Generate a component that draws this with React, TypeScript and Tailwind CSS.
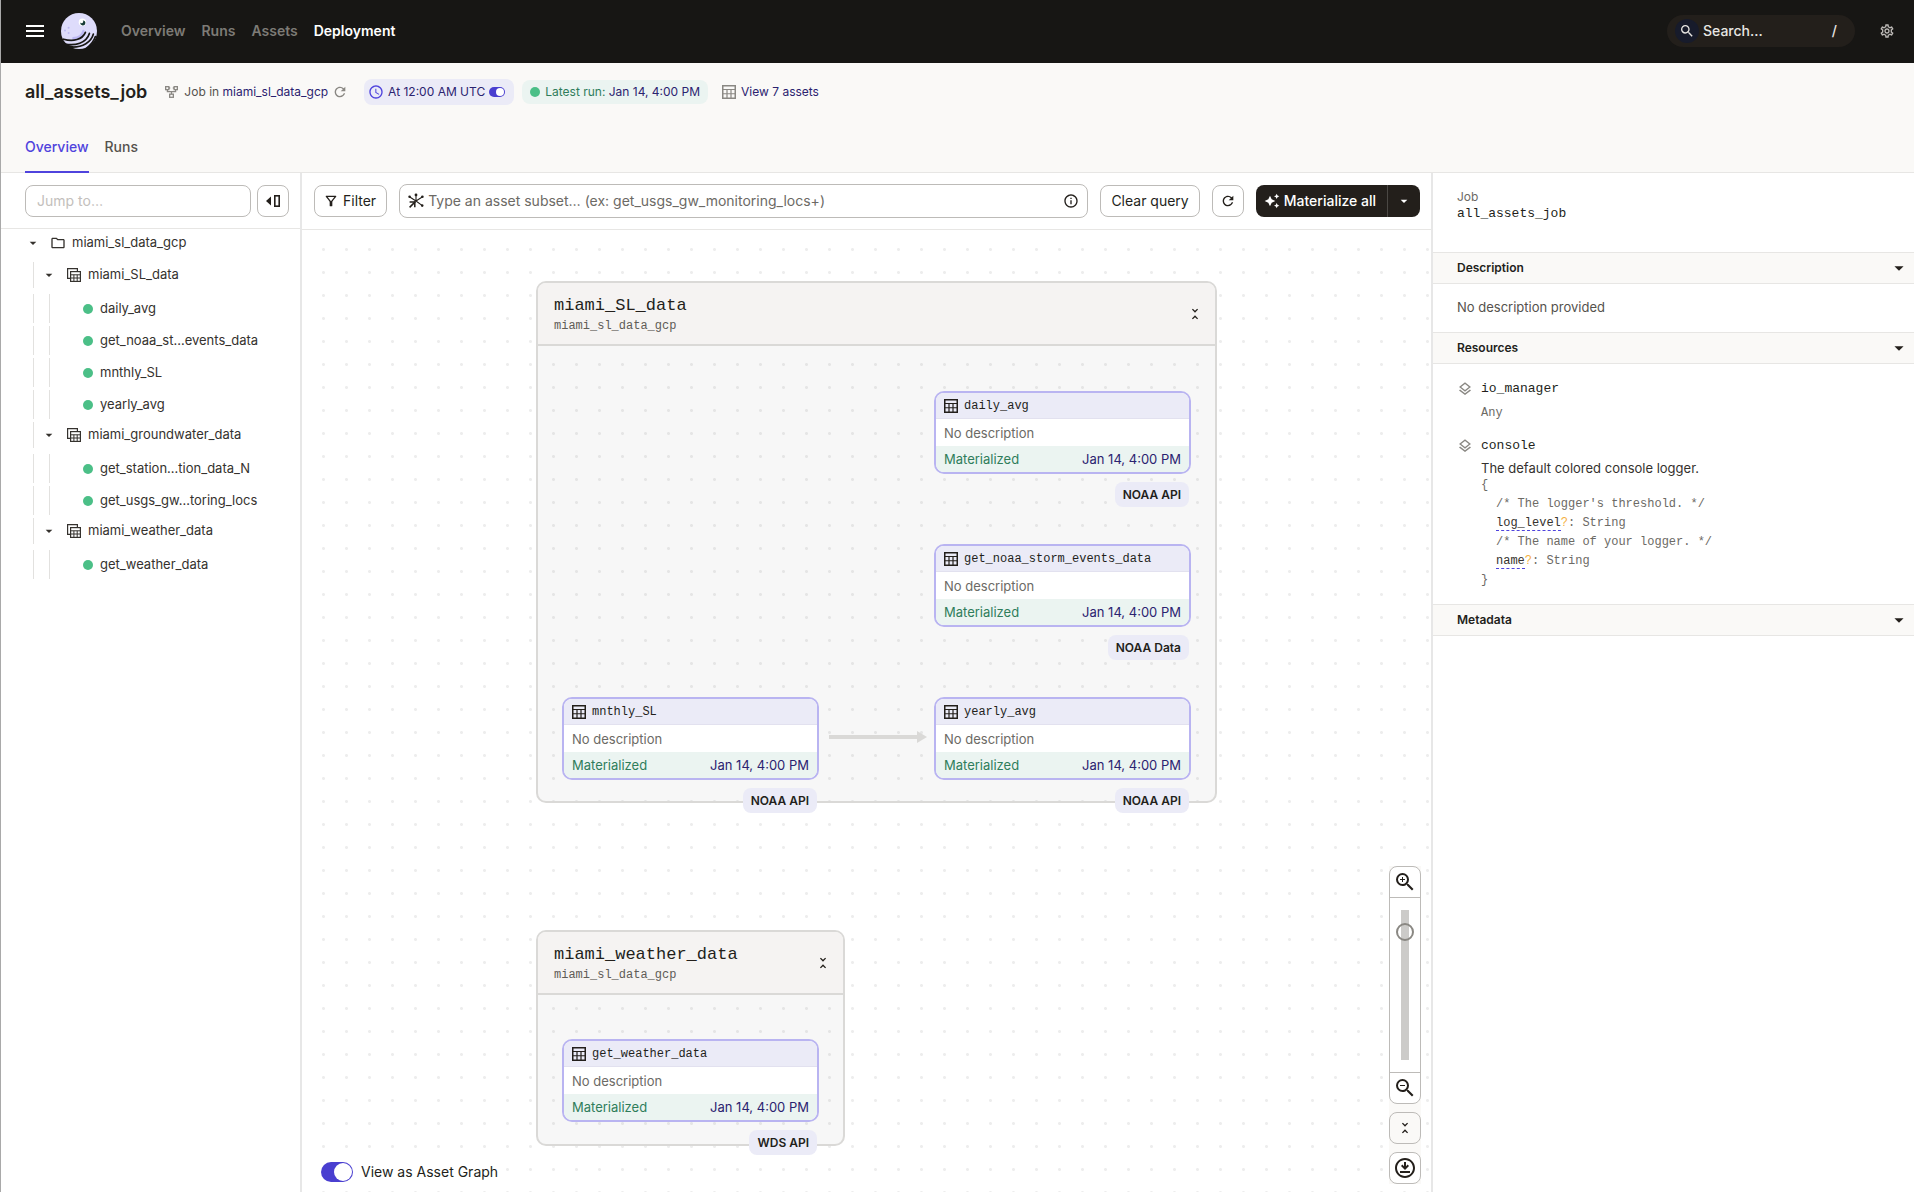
import { useState } from "react";
import type { ReactNode } from "react";
import {
  MdArrowDropDown,
  MdAutoAwesome,
  MdInfoOutline,
  MdOutlineDownloadForOffline,
  MdOutlineFilterAlt,
  MdOutlineFolder,
  MdOutlineLayers,
  MdOutlineSettings,
  MdRefresh,
  MdSchedule,
  MdSearch,
  MdUnfoldLess,
  MdZoomIn,
  MdZoomOut,
} from "react-icons/md";

type TreeRow = {
  kind: "location" | "group" | "asset";
  name: string;
};

type AssetNodeProps = {
  name: string;
  tag: string;
  className: string;
};

type GroupBoxProps = {
  name: string;
  location: string;
  className: string;
};

const TREE: TreeRow[] = [
  { kind: "location", name: "miami_sl_data_gcp" },
  { kind: "group", name: "miami_SL_data" },
  { kind: "asset", name: "daily_avg" },
  { kind: "asset", name: "get_noaa_st…events_data" },
  { kind: "asset", name: "mnthly_SL" },
  { kind: "asset", name: "yearly_avg" },
  { kind: "group", name: "miami_groundwater_data" },
  { kind: "asset", name: "get_station…tion_data_N" },
  { kind: "asset", name: "get_usgs_gw…toring_locs" },
  { kind: "group", name: "miami_weather_data" },
  { kind: "asset", name: "get_weather_data" },
];

const TableIcon = ({ className = "" }: { className?: string }) => (
  <svg
    viewBox="0 0 14 14"
    className={`h-3.5 w-3.5 shrink-0 ${className}`}
    fill="none"
    stroke="currentColor"
  >
    <rect x="0.75" y="0.75" width="12.5" height="12.5" strokeWidth="1.5" />
    <path d="M1 4.5H13M1 8.75H13M5 4.5V13M9 4.5V13" strokeWidth="1.2" />
  </svg>
);

const JobIcon = () => (
  <svg
    viewBox="0 0 13 12"
    className="ml-[18px] h-3 w-[13px] shrink-0 text-[#8a8883]"
    fill="none"
    stroke="currentColor"
    strokeWidth="1.3"
  >
    <rect x="0.65" y="0.65" width="3.2" height="3" />
    <rect x="9.15" y="0.65" width="3.2" height="3" />
    <rect x="4.65" y="8.2" width="3.7" height="3.1" />
    <path d="M2.4 3.8V5.6H10.6V3.8M6.5 5.6V8M3.9 2H5.2M7.8 2H9" />
  </svg>
);

const GroupIcon = () => (
  <svg
    viewBox="0 0 14 14"
    className="h-3.5 w-3.5 shrink-0"
    fill="none"
    stroke="currentColor"
  >
    <path d="M3 10.4H0.6V0.6H10.4V3" strokeWidth="1.2" />
    <rect x="3.6" y="3.6" width="9.8" height="9.8" strokeWidth="1.2" />
    <path d="M3.6 6.8H13.4M3.6 10H13.4M6.9 6.8V13.4M10.2 6.8V13.4" />
  </svg>
);

const PanelHideIcon = () => (
  <svg viewBox="0 0 16 14" className="h-3.5 w-4" fill="none">
    <path d="M6 2.5V11.5L1 7Z" fill="currentColor" />
    <rect
      x="9.8"
      y="1.8"
      width="4.4"
      height="10.4"
      stroke="currentColor"
      strokeWidth="1.6"
    />
  </svg>
);

const SubsetIcon = () => (
  <svg
    viewBox="0 0 16 16"
    className="h-4 w-4 shrink-0"
    fill="none"
    stroke="currentColor"
    strokeWidth="1.1"
  >
    <path d="M8 8V2M8 8L1.8 4M8 8L14.2 4M8 8L14 12.4" />
    <path d="M7.6 8.4L1.6 14.4" strokeWidth="1.5" />
    <path d="M1.6 9H6.8V14.2" strokeWidth="1.5" />
    <g fill="currentColor" stroke="none">
      <circle cx="8" cy="1.9" r="1.4" />
      <circle cx="1.6" cy="3.8" r="1.3" />
      <circle cx="14.4" cy="3.8" r="1.3" />
      <circle cx="14.2" cy="12.6" r="1.3" />
    </g>
  </svg>
);

const Logo = () => (
  <svg viewBox="0 0 36 36" className="h-9 w-9" fill="none">
    <circle cx="18" cy="18" r="18" fill="#dedcfb" />
    <path
      d="M12.4 25.2C18 24.8 21.4 22 22.4 18"
      stroke="#bdb9f3"
      strokeWidth="2.4"
      strokeLinecap="round"
    />
    <g fill="#bdb9f3">
      <circle cx="4" cy="17.4" r="1" />
      <circle cx="7.6" cy="14.8" r="1" />
      <circle cx="7.6" cy="20" r="1" />
    </g>
    {/* gaps between the tentacles */}
    <g stroke="#171614" strokeWidth="1.7" strokeLinecap="round">
      <path d="M2.6 26.2C12 29 21.6 26.6 24.4 19.4" />
      <path d="M3.4 30.8C14 33.4 25.4 30 28.4 20.4" />
      <path d="M11.6 34.2C21.6 34 30 29.6 32.4 21" />
      <path d="M25.4 35.4C29.8 32 33 28.4 34.4 23.6" />
    </g>
    <path d="M1.6 29.4L6 31.6L12.6 33.2L10.6 36H0Z" fill="#171614" />
    <circle cx="21.4" cy="9.2" r="3.7" fill="#ffffff" />
    <path
      d="M21.8 7.4a2.5 2.5 0 1 1 -2.4 2.2 1.3 1.3 0 0 0 2.4-2.2Z"
      fill="#163b36"
    />
  </svg>
);

const StatusDot = () => (
  <span className="h-2.5 w-2.5 shrink-0 rounded-full bg-[#4bbf87]" />
);

const OutlineButton = ({
  children,
  label,
  className = "",
}: {
  children: ReactNode;
  label?: string;
  className?: string;
}) => (
  <button
    aria-label={label}
    className={`flex h-8 shrink-0 items-center justify-center rounded-lg border border-[#bdbbb8] text-sm ${className}`}
  >
    {children}
  </button>
);

const TopBar = () => (
  <header className="flex h-[63px] shrink-0 items-center bg-[#171614] pr-[19px] pb-px pl-[25px] text-white">
    <button aria-label="Menu" className="flex h-3 w-[18px] flex-col justify-between">
      <span className="h-0.5 w-full bg-white" />
      <span className="h-0.5 w-full bg-white" />
      <span className="h-0.5 w-full bg-white" />
    </button>
    <a href="#home" aria-label="Home" className="ml-[17px]">
      <Logo />
    </a>
    <nav className="ml-6 flex gap-4 text-sm font-semibold text-[#7d7b76]">
      <a href="#overview">Overview</a>
      <a href="#runs">Runs</a>
      <a href="#assets">Assets</a>
      <a href="#deployment" className="text-white">
        Deployment
      </a>
    </nav>
    <button className="ml-auto flex h-8 w-[188px] items-center rounded-full bg-[#231f1b] pr-[18px] pl-2 text-sm font-medium text-[#e8e6e3]">
      <span className="mr-1 flex h-6 w-6 items-center justify-center rounded-full bg-[#171b2b]">
        <MdSearch className="h-4 w-4" />
      </span>
      Search…
      <span className="ml-auto">/</span>
    </button>
    <button aria-label="Settings" className="ml-6 text-[#bdbab7]">
      <MdOutlineSettings className="h-4 w-4" />
    </button>
  </header>
);

const JobHeader = () => (
  <div className="h-[110px] shrink-0 border-b border-[#e7e6e4] bg-[#faf9f7] px-6">
    <div className="flex h-[58px] items-center text-xs">
      <h1 className="text-lg font-semibold">all_assets_job</h1>
      <JobIcon />
      <span className="ml-1.5 text-[#55524d]">
        Job in{" "}
        <a href="#location" className="text-[#2b2370]">
          miami_sl_data_gcp
        </a>
      </span>
      <button aria-label="Reload location" className="ml-1 text-[#8a8883]">
        <MdRefresh className="h-4 w-4" />
      </button>
      <span className="ml-4 flex h-[26px] items-center rounded-lg bg-[#ebebf7] px-1 pr-[9px] text-[#2b2370]">
        <MdSchedule className="mr-1 h-4 w-4 text-[#4f43dd]" />
        <label htmlFor="schedule">At 12:00 AM UTC</label>
        <input
          id="schedule"
          type="checkbox"
          defaultChecked
          className="ml-1 flex h-2.5 w-4 appearance-none items-center justify-end rounded-full bg-[#4a3fd0] pr-px before:h-2 before:w-2 before:rounded-full before:bg-white"
        />
      </span>
      <span className="ml-2 flex h-6 items-center rounded-lg bg-[#ebf4f1] px-2 text-[#2f7d5b]">
        <StatusDot />
        <span className="ml-[5px]">
          Latest run:{" "}
          <a href="#run" className="text-[#2b2370]">
            Jan 14, 4:00 PM
          </a>
        </span>
      </span>
      <TableIcon className="ml-3.5 text-[#8a8883]" />
      <a href="#assets" className="ml-[5px] text-[#2b2370]">
        View 7 assets
      </a>
    </div>
    <nav className="flex h-[52px] gap-4 text-sm font-medium">
      <a
        href="#tab-overview"
        className="flex items-center border-b-2 border-[#4f43dd] pt-0.5 text-[#4f43dd]"
      >
        Overview
      </a>
      <a
        href="#tab-runs"
        className="flex items-center border-b-2 border-transparent pt-0.5 text-[#55524d]"
      >
        Runs
      </a>
    </nav>
  </div>
);

const TreeItem = ({ kind, name }: TreeRow) => {
  if (kind === "location") {
    return (
      <li className="flex h-8 items-start pl-6">
        <button className="flex h-[26px] items-center">
          <MdArrowDropDown className="h-4 w-4" />
          <MdOutlineFolder className="mr-1.5 ml-[9px] h-4 w-4" />
          {name}
        </button>
      </li>
    );
  }
  if (kind === "group") {
    return (
      <li className="flex h-8 items-start pl-8">
        <button className="flex h-[26px] items-center border-l border-[#e2e1df] pl-[7px]">
          <MdArrowDropDown className="mr-2.5 h-4 w-4" />
          <GroupIcon />
          <span className="ml-[7px]">{name}</span>
        </button>
      </li>
    );
  }
  return (
    <li className="flex h-8 items-start pl-8">
      <span className="h-[29px] w-4 border-l border-[#e2e1df]" />
      <a
        href={`#${name}`}
        className="flex h-[29px] items-center gap-[7px] border-l border-[#e2e1df] pl-[33px]"
      >
        <StatusDot />
        {name}
      </a>
    </li>
  );
};

const Sidebar = () => (
  <aside className="w-[299px] shrink-0">
    <div className="flex h-14 items-center gap-1.5 border-b border-[#e7e6e4] pr-[11px] pl-6">
      <input
        aria-label="Jump to"
        placeholder="Jump to…"
        className="h-8 w-full min-w-0 rounded-lg border border-[#bdbbb8] px-[11px] text-sm placeholder:text-[#c3c0bc]"
      />
      <OutlineButton label="Hide sidebar" className="w-8">
        <PanelHideIcon />
      </OutlineButton>
    </div>
    <ul className="pt-px text-[13px] text-[#35322e]">
      {TREE.map((row) => (
        <TreeItem key={row.name} {...row} />
      ))}
    </ul>
  </aside>
);

const Toolbar = () => (
  <div className="flex h-[57px] shrink-0 items-center gap-3 border-b border-[#e7e6e4] bg-white pr-[11px] pl-3">
    <OutlineButton className="gap-1 pr-2.5 pl-2">
      <MdOutlineFilterAlt className="h-4 w-4" />
      Filter
    </OutlineButton>
    <label className="flex h-[34px] min-w-0 flex-1 items-center rounded-lg border border-[#bdbbb8] px-2">
      <SubsetIcon />
      <input
        aria-label="Asset subset"
        placeholder="Type an asset subset… (ex: get_usgs_gw_monitoring_locs+)"
        className="min-w-0 flex-1 px-1 text-sm outline-none placeholder:text-[#6c6a65]"
      />
      <MdInfoOutline className="h-4 w-4" />
    </label>
    <OutlineButton className="px-2.5">Clear query</OutlineButton>
    <OutlineButton label="Refresh" className="w-8">
      <MdRefresh className="h-4 w-4" />
    </OutlineButton>
    <div className="flex h-8 shrink-0 rounded-lg bg-[#231f1b] text-sm font-medium text-white">
      <button className="flex items-center gap-1 pr-[11px] pl-2">
        <MdAutoAwesome className="h-4 w-4" />
        Materialize all
      </button>
      <button
        aria-label="More options"
        className="flex w-[33px] items-center justify-center border-l border-[#4b4844]"
      >
        <MdArrowDropDown className="h-4 w-4" />
      </button>
    </div>
  </div>
);

const GroupBox = ({ name, location, className }: GroupBoxProps) => (
  <section
    className={`absolute overflow-hidden rounded-[10px] border-2 border-[#dad9d7] bg-black/3 ${className}`}
  >
    <div className="flex h-[63px] items-center justify-between border-b-2 border-[#dad9d7] bg-[#f5f3f2] px-4 font-['Liberation_Mono',monospace]">
      <div>
        <h2 className="text-[17px] leading-6">{name}</h2>
        <p className="text-xs leading-4 text-[#5f5c57]">{location}</p>
      </div>
      <button aria-label="Collapse group" className="-mr-1">
        <MdUnfoldLess className="h-4 w-4" />
      </button>
    </div>
  </section>
);

const AssetNode = ({ name, tag, className }: AssetNodeProps) => (
  <article className={`absolute w-[257px] text-[13px] ${className}`}>
    <div className="overflow-hidden rounded-[10px] border-2 border-[#b9b4f1] bg-white">
      <h3 className="flex h-[26px] items-center gap-1.5 border-b border-[#e2e1ef] bg-[#ebebf7] px-2 font-['Liberation_Mono',monospace] text-xs">
        <TableIcon />
        {name}
      </h3>
      <p className="h-[27px] px-2 leading-[28px] text-[#6c6a65]">No description</p>
      <p className="flex h-[26px] justify-between bg-[#ebf4f1] px-2 leading-[26px] text-[#2f7d5b]">
        Materialized
        <a href="#run" className="text-[#2b2370]">
          Jan 14, 4:00 PM
        </a>
      </p>
    </div>
    <span className="mt-2 mr-0.5 ml-auto flex h-[25px] w-fit items-center rounded-lg bg-[#ebebf7] px-2 text-xs font-semibold">
      {tag}
    </span>
  </article>
);

const ZoomControls = () => {
  const [zoom, setZoom] = useState(90);

  return (
    <div className="absolute right-2.5 bottom-2 flex w-8 flex-col gap-2 bg-[#faf9f7]">
      <div className="flex flex-col rounded-lg border border-[#bdbbb8] bg-white">
        <button
          aria-label="Zoom in"
          className="flex h-[31px] items-center justify-center border-b border-[#bdbbb8]"
          onClick={() => setZoom(Math.min(100, zoom + 10))}
        >
          <MdZoomIn className="h-6 w-6" />
        </button>
        <div className="flex h-[174px] items-center justify-center">
          <input
            type="range"
            aria-label="Zoom level"
            value={zoom}
            onChange={(e) => setZoom(Number(e.target.value))}
            className="h-[150px] w-[18px] appearance-none bg-[linear-gradient(#cccbc9,#cccbc9)] bg-[length:8px_100%] bg-center bg-no-repeat [direction:rtl] [writing-mode:vertical-lr] [&::-webkit-slider-thumb]:h-[18px] [&::-webkit-slider-thumb]:w-[18px] [&::-webkit-slider-thumb]:appearance-none [&::-webkit-slider-thumb]:rounded-full [&::-webkit-slider-thumb]:border-2 [&::-webkit-slider-thumb]:border-[#8a8883]"
          />
        </div>
        <button
          aria-label="Zoom out"
          className="flex h-[31px] items-center justify-center border-t border-[#bdbbb8]"
          onClick={() => setZoom(Math.max(0, zoom - 10))}
        >
          <MdZoomOut className="h-6 w-6" />
        </button>
      </div>
      <OutlineButton label="Collapse all">
        <MdUnfoldLess className="h-4 w-4" />
      </OutlineButton>
      <OutlineButton label="Download image" className="bg-white">
        <MdOutlineDownloadForOffline className="h-6 w-6" />
      </OutlineButton>
    </div>
  );
};

const Graph = () => (
  <div className="relative min-h-0 flex-1 overflow-hidden bg-[radial-gradient(circle,#ededed_1px,transparent_2px)] bg-[size:23px_23px] bg-position-[10px_8px]">
    <GroupBox
      name="miami_SL_data"
      location="miami_sl_data_gcp"
      className="top-[51px] left-[234px] h-[522px] w-[681px]"
    />
    <GroupBox
      name="miami_weather_data"
      location="miami_sl_data_gcp"
      className="top-[700px] left-[234px] h-[216px] w-[309px]"
    />

    {/* mnthly_SL feeds yearly_avg */}
    <svg
      viewBox="0 0 98 12"
      className="absolute top-[501px] left-[527px] h-3 w-[98px]"
      fill="#dad9d7"
    >
      <rect y="4" width="90" height="4" />
      <path d="M88 0L98 6L88 12Z" />
    </svg>

    <AssetNode name="daily_avg" tag="NOAA API" className="top-[161px] left-[632px]" />
    <AssetNode
      name="get_noaa_storm_events_data"
      tag="NOAA Data"
      className="top-[314px] left-[632px]"
    />
    <AssetNode name="mnthly_SL" tag="NOAA API" className="top-[467px] left-[260px]" />
    <AssetNode name="yearly_avg" tag="NOAA API" className="top-[467px] left-[632px]" />
    <AssetNode name="get_weather_data" tag="WDS API" className="top-[809px] left-[260px]" />

    <label className="absolute bottom-2.5 left-[19px] flex items-center gap-2 bg-white pr-2 text-sm">
      <input
        type="checkbox"
        defaultChecked
        className="flex h-5 w-8 appearance-none items-center justify-end rounded-full bg-[#4a3fd0] pr-px before:h-[18px] before:w-[18px] before:rounded-full before:bg-white"
      />
      View as Asset Graph
    </label>

    <ZoomControls />
  </div>
);

const SectionHeader = ({ title }: { title: string }) => (
  <button className="flex h-8 w-full items-center justify-between border-y border-[#e7e6e4] bg-[#faf9f7] pr-1 pl-6 text-xs font-semibold">
    {title}
    <MdArrowDropDown className="h-[22px] w-[22px]" />
  </button>
);

const ResourceTitle = ({ name }: { name: string }) => (
  <h3 className="flex h-5 items-center gap-2 font-['Liberation_Mono',monospace] text-[13px]">
    <MdOutlineLayers className="h-4 w-4 text-[#8a8883]" />
    {name}
  </h3>
);

const ConfigField = ({ name }: { name: string }) => (
  <p>
    <span className="border-b border-dashed border-[#4f43dd] text-[#35322e]">{name}</span>
    <span className="text-[#f5b042]">?</span>: String
  </p>
);

const DetailsPanel = () => (
  <aside className="w-[481px] shrink-0">
    <div className="h-[79px] px-6 pt-4">
      <p className="text-xs leading-4 text-[#6c6a65]">Job</p>
      <h2 className="font-['Liberation_Mono',monospace] text-[13px] leading-[18px]">
        all_assets_job
      </h2>
    </div>
    <SectionHeader title="Description" />
    <p className="flex h-12 items-center px-6 text-[13px] text-[#55524d]">
      No description provided
    </p>
    <SectionHeader title="Resources" />
    <div className="h-60 px-6 pt-[15px]">
      <ResourceTitle name="io_manager" />
      <p className="mt-1 pl-6 font-['Liberation_Mono',monospace] text-xs leading-5 text-[#6c6a65]">
        Any
      </p>
      <div className="mt-[13px]">
        <ResourceTitle name="console" />
        <p className="pt-1 pl-6 text-[13px] leading-4 text-[#35322e]">
          The default colored console logger.
        </p>
        <div className="pl-6 font-['Liberation_Mono',monospace] text-xs leading-[19px] text-[#6c6a65]">
          <p>{"{"}</p>
          <div className="pl-[15px]">
            <p>{"/* The logger's threshold. */"}</p>
            <ConfigField name="log_level" />
            <p>{"/* The name of your logger. */"}</p>
            <ConfigField name="name" />
          </div>
          <p>{"}"}</p>
        </div>
      </div>
    </div>
    <SectionHeader title="Metadata" />
  </aside>
);

const App = () => (
  <div className="flex h-screen flex-col border-l border-[#a9a9a9] bg-white font-[Inter,sans-serif] text-[#231f1b]">
    <TopBar />
    <JobHeader />
    <div className="flex min-h-0 flex-1">
      <Sidebar />
      <main className="flex min-w-0 flex-1 flex-col border-x-2 border-[#e7e7e7]">
        <Toolbar />
        <Graph />
      </main>
      <DetailsPanel />
    </div>
  </div>
);

export default App;
